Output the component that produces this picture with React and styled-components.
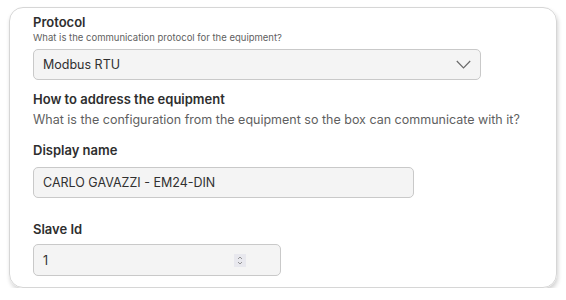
import React from "react";
import styled, { createGlobalStyle } from "styled-components";

const Global = createGlobalStyle`
  html, body { margin: 0; padding: 0; background: #ffffff; }
  body { font-family: Inter, "Noto Sans", sans-serif; color: #2b2b2b; }
  * { box-sizing: border-box; }
`;

const Page = styled.div`
  padding: 7px 9px 0 9px;
  width: 566px;
`;

const Card = styled.div`
  width: 548px;
  height: 281px;
  border: 1px solid #d6d6d6;
  border-radius: 14px;
  box-shadow: 1px 3px 4px rgba(0, 0, 0, 0.18);
  padding: 6px 23px 0 23px;
  display: flex;
  flex-direction: column;
`;

const Section = styled.div`
  display: flex;
  flex-direction: column;
  margin-top: ${(p) => p.$mt || 0}px;
`;

const Title = styled.div`
  font-size: 13px;
  font-weight: 600;
  line-height: 17px;
  color: #2e2e2e;
`;

const Hint = styled.div`
  font-size: ${(p) => (p.$small ? 9.5 : 12.5)}px;
  line-height: ${(p) => (p.$small ? 13 : 20)}px;
  margin-top: ${(p) => (p.$small ? 0 : 2)}px;
  color: #5f5f5f;
`;

const Field = styled.div`
  width: ${(p) => p.$w}px;
  height: ${(p) => p.$h || 31}px;
  margin-top: ${(p) => p.$mt || 0}px;
  background: #f4f4f4;
  border: 1px solid #c9c9c9;
  border-radius: 5px;
  display: flex;
  align-items: center;
  justify-content: space-between;
  padding: 0 ${(p) => (p.$pr != null ? p.$pr : 12)}px 0 9px;
  font-size: 12.5px;
  color: #303030;
`;

const Spinner = styled.div`
  width: 12px;
  height: 13px;
  background: #e8e8ee;
  display: flex;
  align-items: center;
  justify-content: center;
  margin-right: 22px;
`;

export default function App() {
  return (
    <>
      <Global />
      <Page>
        <Card>
          <Section>
            <Title>Protocol</Title>
            <Hint $small>What is the communication protocol for the equipment?</Hint>
            <Field $w={448} $h={31} $mt={5} $pr={9}>
              <span>Modbus RTU</span>
              <svg width="15" height="9" viewBox="0 0 15 9">
                <path d="M0.8 1 L7.5 7.8 L14.2 1" fill="none" stroke="#6a6a6a" strokeWidth="1.2" />
              </svg>
            </Field>
          </Section>
          <Section $mt={11}>
            <Title>How to address the equipment</Title>
            <Hint>What is the configuration from the equipment so the box can communicate with it?</Hint>
          </Section>
          <Section $mt={12}>
            <Title>Display name</Title>
            <Field $w={381} $h={31} $mt={8}>
              <span>CARLO GAVAZZI - EM24-DIN</span>
            </Field>
          </Section>
          <Section $mt={23}>
            <Title>Slave Id</Title>
            <Field $w={248} $h={32} $mt={6}>
              <span>1</span>
              <Spinner>
                <svg width="6" height="11" viewBox="0 0 6 11">
                  <path d="M1 4 L3 2 L5 4 M1 7 L3 9 L5 7" fill="none" stroke="#8a8a8a" strokeWidth="0.9" />
                </svg>
              </Spinner>
            </Field>
          </Section>
        </Card>
      </Page>
    </>
  );
}
